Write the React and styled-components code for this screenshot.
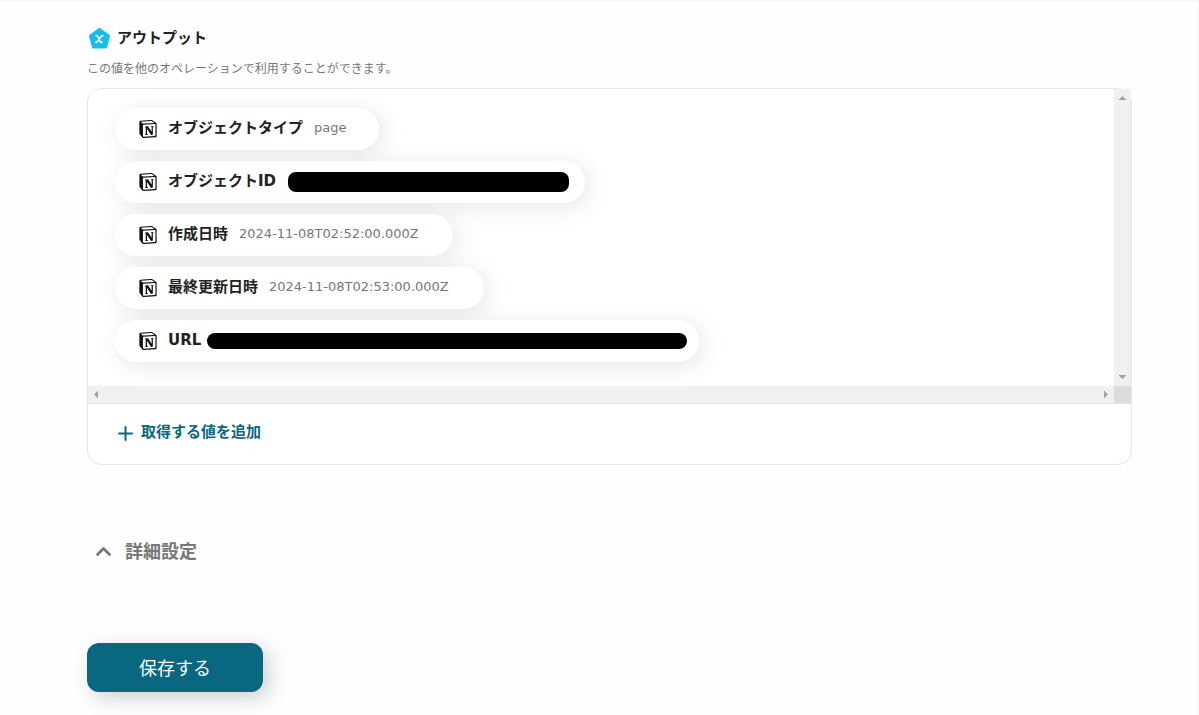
import React from "react";
import styled, { createGlobalStyle } from "styled-components";
import { SiNotion } from "react-icons/si";

const GlobalStyle = createGlobalStyle`
  * { box-sizing: border-box; }
  body {
    margin: 0;
    background: #fefefe;
    color: #222;
    font-family: "DejaVu Sans", "Noto Sans CJK JP", sans-serif;
  }
`;

const Page = styled.main`
  min-height: 100vh;
  padding: 25px 66px 24px 87px;
  border-top: 1px solid #f4f4f4;
  border-right: 1px solid #f4f4f4;
`;

const Heading = styled.h2`
  display: flex;
  align-items: center;
  gap: 6px;
  margin: 0;
  font-size: 15px;
  line-height: 24px;
`;

const BadgeIcon = styled.svg`
  width: 24px;
  height: 24px;
`;

const Description = styled.p`
  margin: 10px 0 9px;
  font-size: 12px;
  line-height: 19px;
  color: #777;
`;

const Card = styled.section`
  background: #fff;
  border: 1px solid #e6e6e6;
  border-radius: 14px;
`;

const ScrollFrame = styled.div`
  display: grid;
  grid-template-columns: 1fr 17px;
  grid-template-rows: auto 17px;
  border-bottom: 1px solid #e3e3e3;
`;

const ChipList = styled.ul`
  display: flex;
  flex-direction: column;
  align-items: flex-start;
  gap: 11px;
  margin: 0;
  padding: 19px 27px 24px;
  list-style: none;
  overflow: hidden;
  border-top-left-radius: 13px;
`;

const Chip = styled.li`
  display: flex;
  align-items: center;
  width: ${(p) => p.$width}px;
  height: 42px;
  padding-left: 24px;
  border-radius: 21px;
  background: #fff;
  box-shadow: 4px 4px 24px rgba(0, 0, 0, 0.1);
  white-space: nowrap;
`;

const ChipLabel = styled.span`
  margin: 0 0 3px 11px;
  font-size: 15px;
  line-height: 22px;
  font-weight: 700;
`;

const ChipValue = styled.span`
  margin: 0 0 2px 11px;
  font-size: 13px;
  line-height: 20px;
  color: #777;
`;

const Redaction = styled.span`
  width: ${(p) => p.$width}px;
  height: ${(p) => p.$height}px;
  margin-left: auto;
  margin-right: ${(p) => p.$end}px;
  border-radius: 8px;
  background: #000;
`;

const Track = styled.div`
  display: flex;
  flex-direction: ${(p) => (p.$vertical ? "column" : "row")};
  justify-content: space-between;
  align-items: center;
  padding: ${(p) => (p.$vertical ? "7px 0" : "0 6px")};
  background: #f0f0f0;
`;

const ScrollCorner = styled.div`
  background: #dcdcdc;
`;

const Arrow = styled.svg`
  display: block;
  fill: #a3a3a3;
`;

const CardFooter = styled.div`
  padding: 17px 30px 20px;
`;

const AddButton = styled.button`
  display: flex;
  align-items: center;
  gap: 8px;
  padding: 0;
  border: 0;
  background: none;
  color: #0a6780;
  font: inherit;
  font-size: 15px;
  line-height: 23px;
  font-weight: 700;
  cursor: pointer;
`;

const PlusIcon = styled.svg`
  width: 15px;
  height: 15px;
  margin-top: 2px;
`;

const DetailsToggle = styled.button`
  display: flex;
  align-items: center;
  gap: 13px;
  margin: 73px 0 78px 8px;
  padding: 0;
  border: 0;
  background: none;
  color: #777;
  font: inherit;
  font-size: 18px;
  line-height: 27px;
  font-weight: 700;
  cursor: pointer;
`;

const SaveButton = styled.button`
  display: block;
  width: 176px;
  height: 49px;
  padding: 2px 0 0;
  border: 0;
  border-radius: 12px;
  background: #0a6780;
  color: #fff;
  font: inherit;
  font-size: 18px;
  line-height: 27px;
  box-shadow: 6px 6px 20px rgba(20, 50, 65, 0.22);
  cursor: pointer;
`;

const ARROWS = {
  up: { w: 7, h: 4, d: "M3 0h1v1h1v1h1v1h1v1H0V3h1V2h1V1h1z" },
  down: { w: 7, h: 4, d: "M0 0h7v1H6v1H5v1H4v1H3V3H2V2H1V1H0z" },
  left: { w: 4, h: 7, d: "M0 3h1V2h1V1h1V0h1v7H3V6H2V5H1V4H0z" },
  right: { w: 4, h: 7, d: "M0 0h1v1h1v1h1v1h1v1H3v1H2v1H1v1H0z" },
};

function ScrollArrow({ direction }) {
  const { w, h, d } = ARROWS[direction];
  return (
    <Arrow width={w} height={h} viewBox={`0 0 ${w} ${h}`} aria-hidden="true">
      <path d={d} />
    </Arrow>
  );
}

const outputs = [
  { label: "オブジェクトタイプ", value: "page", width: 264 },
  { label: "オブジェクトID", redacted: { width: 281, height: 20, end: 16 }, width: 470 },
  { label: "作成日時", value: "2024-11-08T02:52:00.000Z", width: 338 },
  { label: "最終更新日時", value: "2024-11-08T02:53:00.000Z", width: 369 },
  { label: "URL", redacted: { width: 480, height: 16, end: 12 }, width: 584 },
];

export default function App() {
  return (
    <>
      <GlobalStyle />
      <Page>
        <Heading>
          <BadgeIcon viewBox="0 0 24 24" aria-hidden="true">
            <path
              d="M12.5 3.5 21.5 10 18.5 21H6.5L3.5 10z"
              fill="#14bdeb"
              stroke="#14bdeb"
              strokeWidth="3"
              strokeLinejoin="round"
            />
            <path
              d="M8.6 9.7h1.2q.8 0 1.200.9l2 4.900q.4.9 1.200.9h1.500M16.400 9.700h-.7q-.8 0-1.400.8l-4 5q-.6.9-1.400.9h-.6"
              fill="none"
              stroke="#fff"
              strokeWidth="1.700"
            />
          </BadgeIcon>
          アウトプット
        </Heading>
        <Description>この値を他のオペレーションで利用することができます。</Description>

        <Card>
          <ScrollFrame>
            <ChipList>
              {outputs.map((o) => (
                <Chip key={o.label} $width={o.width}>
                  <SiNotion size={18} color="#111" aria-hidden="true" />
                  <ChipLabel>{o.label}</ChipLabel>
                  {o.redacted ? (
                    <Redaction
                      $width={o.redacted.width}
                      $height={o.redacted.height}
                      $end={o.redacted.end}
                    />
                  ) : (
                    <ChipValue>{o.value}</ChipValue>
                  )}
                </Chip>
              ))}
            </ChipList>
            <Track $vertical>
              <ScrollArrow direction="up" />
              <ScrollArrow direction="down" />
            </Track>
            <Track>
              <ScrollArrow direction="left" />
              <ScrollArrow direction="right" />
            </Track>
            <ScrollCorner />
          </ScrollFrame>
          <CardFooter>
            <AddButton type="button">
              <PlusIcon viewBox="0 0 15 15" aria-hidden="true">
                <path
                  d="M7.5 1v13M1 7.5h13"
                  stroke="currentColor"
                  strokeWidth="2"
                  strokeLinecap="round"
                />
              </PlusIcon>
              取得する値を追加
            </AddButton>
          </CardFooter>
        </Card>

        <DetailsToggle type="button" aria-expanded="false">
          <svg width="17" height="17" viewBox="0 0 17 17" aria-hidden="true">
            <path
              d="M2.5 11.500 8.500 5.500l6 6"
              fill="none"
              stroke="currentColor"
              strokeWidth="2.8"
              strokeLinecap="round"
              strokeLinejoin="round"
            />
          </svg>
          詳細設定
        </DetailsToggle>

        <SaveButton type="button">保存する</SaveButton>
      </Page>
    </>
  );
}
